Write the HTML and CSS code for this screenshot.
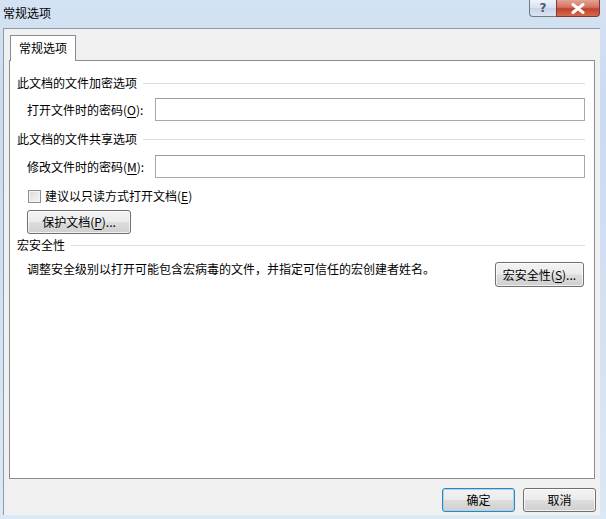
FILE: index.html
```html
<!DOCTYPE html>
<html lang="zh-CN">
<head>
<meta charset="utf-8">
<title>常规选项</title>
<link rel="stylesheet" href="styles.css">
</head>
<body>
<div class="window">
  <div class="titlebar">
    <span class="title">常规选项</span>
    <div class="controls">
      <div class="ctl help">?</div>
      <div class="ctl close">
        <svg width="14" height="11" viewBox="0 0 14 11"><path d="M2 1.5 L12 9.5 M12 1.5 L2 9.5" stroke="#fff" stroke-width="3" stroke-linecap="round"/></svg>
      </div>
    </div>
  </div>
  <div class="client">
    <div class="tabs"><div class="tab">常规选项</div></div>
    <div class="panel">
      <div class="group g1"><span>此文档的文件加密选项</span><i class="rule"></i></div>
      <div class="field f1"><span class="label">打开文件时的密码(<u>O</u>):</span><div class="input"></div></div>
      <div class="group g2"><span>此文档的文件共享选项</span><i class="rule"></i></div>
      <div class="field f2"><span class="label">修改文件时的密码(<u>M</u>):</span><div class="input"></div></div>
      <div class="check"><span class="box"></span><span>建议以只读方式打开文档(<u>E</u>)</span></div>
      <div class="btn protect">保护文档(<u>P</u>)...</div>
      <div class="group g3"><span>宏安全性</span><i class="rule"></i></div>
      <div class="macro"><span class="desc">调整安全级别以打开可能包含宏病毒的文件，并指定可信任的宏创建者姓名。</span><div class="btn macrobtn">宏安全性(<u>S</u>)...</div></div>
    </div>
    <div class="footer">
      <div class="btn ok">确定</div>
      <div class="btn cancel">取消</div>
    </div>
  </div>
</div>
</body>
</html>
```
FILE: styles.css
```css
html, body { margin: 0; padding: 0; }
body {
  width: 606px; height: 519px; overflow: hidden;
  font-family: "Noto Sans CJK SC", "Microsoft YaHei", sans-serif;
  font-size: 12px; color: #000;
}
.window {
  width: 606px; height: 519px; box-sizing: border-box;
  display: flex; flex-direction: column;
  padding: 0 6px 4px 3px;
  background: linear-gradient(180deg, #d4e3f3 0%, #c9dbef 20%, #dbe8f6 100%);
}
.titlebar {
  height: 28px; display: flex; align-items: flex-start; flex: none;
  margin-left: -3px;
}
.title { padding: 4px 0 0 3px; line-height: 18px; font-size: 12px; }
.controls { margin-left: auto; display: flex; }
.ctl {
  height: 17px; box-sizing: border-box; border: 1px solid #6f7a87;
  display: flex; align-items: center; justify-content: center;
}
.help {
  width: 27px; border-right: none; border-top: none; border-radius: 0 0 0 4px;
  background: linear-gradient(180deg, #eef3f9 0%, #d6e1ee 50%, #c5d4e6 51%, #d9e5f2 100%);
  color: #4b5a6c; font-family: "DejaVu Sans", sans-serif; font-weight: bold; font-size: 12px; line-height: 1;
}
.close {
  width: 44px; border-top: none; border-radius: 0 0 4px 0; border-color: #7d3a33;
  background: linear-gradient(180deg, #e4a394 0%, #d2735f 45%, #c2402b 55%, #d66a4f 100%);
}
.client {
  flex: 1; display: flex; flex-direction: column;
  background: #f0f0f0; border: 1px solid #8e9aa9; border-bottom: none; border-right: none;
  padding: 6px 5px 0 5px; box-sizing: border-box;
}
.tabs { display: flex; height: 25px; padding-left: 1px; position: relative; z-index: 1; }
.tab {
  width: 66px; height: 26px; box-sizing: border-box;
  background: #fff; border: 1px solid #898c95; border-bottom: none;
  padding: 4px 0 0 8px; line-height: 16px;
}
.panel {
  height: 419px; box-sizing: border-box; background: #fff;
  border: 1px solid #898c95; padding: 0 9px 0 7px;
  display: flex; flex-direction: column;
}
.group { display: flex; align-items: center; line-height: 16px; }
.group .rule { flex: 1; height: 1px; background: #d5dfe5; margin-left: 6px; }
.g1 { margin-top: 14px; }
.g2 { margin-top: 10px; }
.g3 { margin-top: 3px; }
.field { display: flex; align-items: center; padding-left: 10px; }
.f1 { margin-top: 7px; }
.f2 { margin-top: 8px; }
.label { width: 128px; line-height: 16px; }
.input {
  flex: 1; height: 23px; box-sizing: border-box;
  border: 1px solid #a9a9a9; border-top-color: #9b9b9b; background: #fff;
}
.check { display: flex; align-items: center; margin-top: 10px; padding-left: 11px; line-height: 16px; }
.box {
  width: 13px; height: 13px; box-sizing: border-box; border: 1px solid #8e8f8f;
  background: linear-gradient(135deg, #dcdcdc 0%, #f5f5f5 100%); margin-right: 4px;
  box-shadow: inset 0 0 0 1px #f4f4f4;
}
.btn {
  box-sizing: border-box; border: 1px solid #707070; border-radius: 3px;
  background: linear-gradient(180deg, #f3f3f3 0%, #ebebeb 48%, #dddddd 52%, #cfcfcf 100%);
  box-shadow: inset 0 0 0 1px rgba(255,255,255,0.7);
  display: flex; align-items: center; justify-content: center; line-height: 16px;
}
.protect { width: 104px; height: 24px; margin-top: 6px; margin-left: 10px; }
.macro { display: flex; align-items: flex-start; margin-top: 8px; padding-left: 10px; }
.desc { flex: 1; line-height: 16px; }
.macrobtn { width: 89px; height: 25px; margin-top: 1px; margin-right: 1px; }
.footer { display: flex; justify-content: flex-end; gap: 8px; padding: 9px 0 0 0; margin-right: -1px; }
.ok, .cancel { width: 73px; height: 24px; }
.ok {
  border-color: #3c7fb1;
  box-shadow: inset 0 0 0 1px #9fd8f5;
  background: linear-gradient(180deg, #f2f2f2 0%, #ebebeb 48%, #dddddd 52%, #cfcfcf 100%);
}
u { text-decoration: underline; text-underline-offset: 2px; }
```
